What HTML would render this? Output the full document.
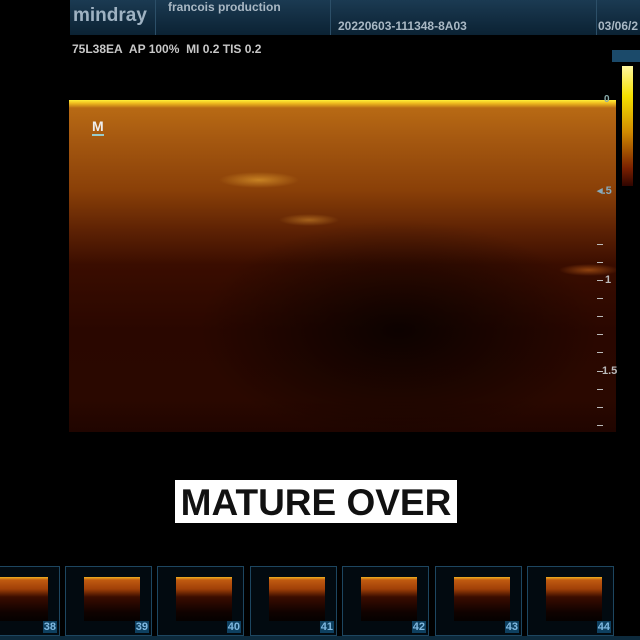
<!DOCTYPE html>
<html><head><meta charset="utf-8"><style>
body{margin:0;width:640px;height:640px;background:#000;overflow:hidden;position:relative;font-family:"Liberation Sans",sans-serif}
div{position:absolute}
.hdr{left:70px;top:0;width:570px;height:35px;background:linear-gradient(#1b3a52,#0b2233);}
.t{color:#a9b8c4;font-weight:bold;font-size:12px;white-space:nowrap}
.img{left:69px;top:100px;width:547px;height:332px;
background:
radial-gradient(ellipse 40px 8px at 190px 80px,rgba(255,190,60,.5),transparent),
radial-gradient(ellipse 30px 6px at 240px 120px,rgba(255,180,60,.4),transparent),
radial-gradient(ellipse 30px 6px at 520px 170px,rgba(230,120,30,.5),transparent),
radial-gradient(ellipse 200px 110px at 330px 230px,rgba(0,0,0,.7),transparent),
linear-gradient(#fff03a 0,#f2c020 3px,#b86a14 8px,#a55810 40px,#8a4008 90px,#5e2204 130px,#3a0d00 165px,#2a0700 230px,#2a0800 300px,#200500 332px);}
.sb{left:622px;top:66px;width:11px;height:120px;background:linear-gradient(#fff7a0,#f4e000 25%,#d08a00 55%,#7a2000 85%,#300500)}
.tick{width:6px;height:1px;background:#bbb;left:597px}
.th{top:566px;width:87px;height:70px;background:#020a10;border:1px solid #1d4660;box-sizing:border-box}
.th i{position:absolute;left:18px;top:10px;width:56px;height:44px;background:linear-gradient(#f0b020 0,#c05a10 3px,#a04008 12px,#3a0c00 20px,#100200 35px,#050100)}
.th b{position:absolute;right:2px;bottom:2px;color:#7fb8e0;background:#0e4060;font-size:11px;padding:0 1px}
</style></head><body>
<div class="hdr"></div>
<div style="left:155px;top:0;width:1px;height:35px;background:#2c4f68"></div>
<div style="left:330px;top:0;width:1px;height:35px;background:#2c4f68"></div>
<div style="left:596px;top:0;width:1px;height:35px;background:#2c4f68"></div>
<div class="t" style="left:73px;top:5px;font-size:19px;color:#9fb2c2">mindray</div>
<div class="t" style="left:168px;top:0px">francois production</div>
<div class="t" style="left:338px;top:19px">20220603-111348-8A03</div>
<div class="t" style="left:598px;top:19px">03/06/2</div>
<div class="t" style="left:72px;top:42px;color:#c8c8c8">75L38EA&nbsp; AP 100%&nbsp; MI 0.2 TIS 0.2</div>
<div style="left:612px;top:50px;width:28px;height:12px;background:#1b4a6a"></div>
<div class="img"></div>
<div class="t" style="left:92px;top:118px;color:#eee;font-size:14px;border-bottom:2px solid #9cc">M</div>
<div class="sb"></div>
<div class="t" style="left:604px;top:94px;font-size:10px;color:#8aa">0</div>
<div class="t" style="left:597px;top:184px;font-size:11px;color:#8ab">◂.5</div>
<div class="t" style="left:605px;top:274px;font-size:11px;color:#bbb">1</div>
<div class="t" style="left:602px;top:365px;font-size:11px;color:#bbb">1.5</div>
<div class="tick" style="top:244px"></div><div class="tick" style="top:262px"></div><div class="tick" style="top:280px"></div><div class="tick" style="top:298px"></div><div class="tick" style="top:316px"></div><div class="tick" style="top:334px"></div><div class="tick" style="top:352px"></div><div class="tick" style="top:371px"></div><div class="tick" style="top:389px"></div><div class="tick" style="top:407px"></div><div class="tick" style="top:425px"></div>
<div style="left:175px;top:480px;width:282px;height:43px;background:#fff;color:#111;font-weight:bold;font-size:37px;line-height:45px;text-align:center">MATURE OVER</div>
<div style="left:0;top:636px;width:640px;height:4px;background:#0d2a3c"></div>
<div class="th" style="left:-27px"><i></i><b>38</b></div>
<div class="th" style="left:65px"><i></i><b>39</b></div>
<div class="th" style="left:157px"><i></i><b>40</b></div>
<div class="th" style="left:250px"><i></i><b>41</b></div>
<div class="th" style="left:342px"><i></i><b>42</b></div>
<div class="th" style="left:435px"><i></i><b>43</b></div>
<div class="th" style="left:527px"><i></i><b>44</b></div>
</body></html>
